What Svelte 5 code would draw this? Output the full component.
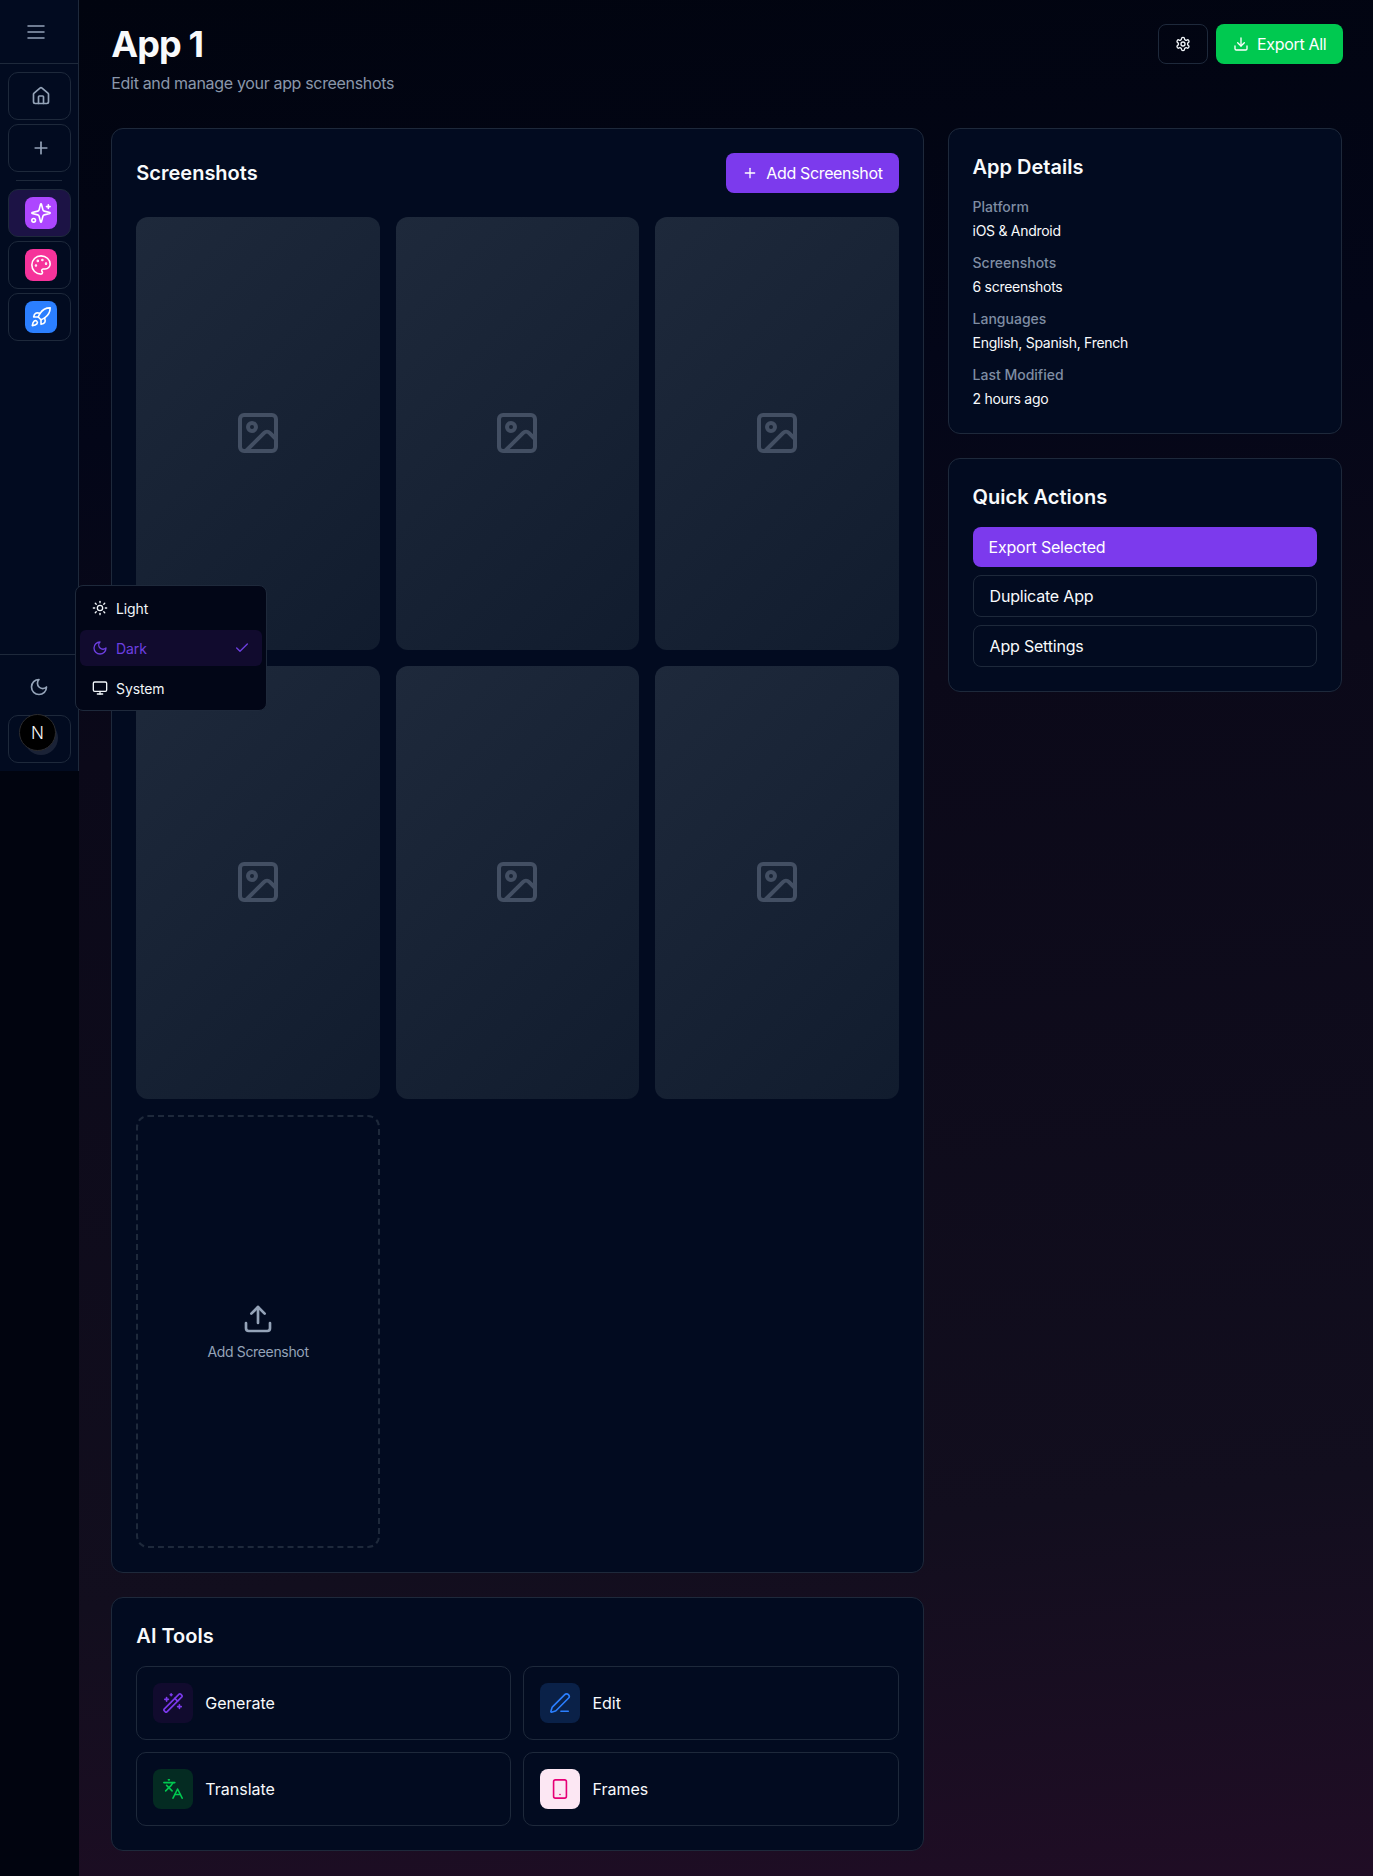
<script>
  const icons = {
    menu: '<path d="M4 12h16"/><path d="M4 6h16"/><path d="M4 18h16"/>',
    home: '<path d="M15 21v-8a1 1 0 0 0-1-1h-4a1 1 0 0 0-1 1v8"/><path d="M3 10a2 2 0 0 1 .709-1.528l7-5.999a2 2 0 0 1 2.582 0l7 5.999A2 2 0 0 1 21 10v9a2 2 0 0 1-2 2H5a2 2 0 0 1-2-2z"/>',
    plus: '<path d="M5 12h14"/><path d="M12 5v14"/>',
    sparkles: '<path d="M9.937 15.5A2 2 0 0 0 8.5 14.063l-6.135-1.582a.5.5 0 0 1 0-.962L8.5 9.936A2 2 0 0 0 9.937 8.5l1.582-6.135a.5.5 0 0 1 .963 0L14.063 8.5A2 2 0 0 0 15.5 9.937l6.135 1.581a.5.5 0 0 1 0 .964L15.5 14.063a2 2 0 0 0-1.437 1.437l-1.582 6.135a.5.5 0 0 1-.963 0z"/><path d="M20 3v4"/><path d="M22 5h-4"/><circle cx="4" cy="20" r="2"/>',
    palette: '<circle cx="13.5" cy="6.5" r=".5" fill="currentColor"/><circle cx="17.5" cy="10.5" r=".5" fill="currentColor"/><circle cx="8.5" cy="7.5" r=".5" fill="currentColor"/><circle cx="6.5" cy="12.5" r=".5" fill="currentColor"/><path d="M12 2C6.5 2 2 6.5 2 12s4.5 10 10 10c.926 0 1.648-.746 1.648-1.688 0-.437-.18-.835-.437-1.125-.29-.289-.438-.652-.438-1.125a1.64 1.64 0 0 1 1.668-1.668h1.996c3.051 0 5.555-2.503 5.555-5.554C21.965 6.012 17.461 2 12 2z"/>',
    rocket: '<path d="M4.5 16.5c-1.5 1.26-2 5-2 5s3.74-.5 5-2c.71-.84.7-2.13-.09-2.91a2.18 2.18 0 0 0-2.91-.09z"/><path d="m12 15-3-3a22 22 0 0 1 2-3.95A12.88 12.88 0 0 1 22 2c0 2.72-.78 7.5-6 11a22.35 22.35 0 0 1-4 2z"/><path d="M9 12H4s.55-3.03 2-4c1.62-1.08 5 0 5 0"/><path d="M12 15v5s3.03-.55 4-2c1.08-1.62 0-5 0-5"/>',
    settings: '<path d="M12.22 2h-.44a2 2 0 0 0-2 2v.18a2 2 0 0 1-1 1.73l-.43.25a2 2 0 0 1-2 0l-.15-.08a2 2 0 0 0-2.73.73l-.22.38a2 2 0 0 0 .73 2.73l.15.1a2 2 0 0 1 1 1.72v.51a2 2 0 0 1-1 1.74l-.15.09a2 2 0 0 0-.73 2.73l.22.38a2 2 0 0 0 2.73.73l.15-.08a2 2 0 0 1 2 0l.43.25a2 2 0 0 1 1 1.73V20a2 2 0 0 0 2 2h.44a2 2 0 0 0 2-2v-.18a2 2 0 0 1 1-1.73l.43-.25a2 2 0 0 1 2 0l.15.08a2 2 0 0 0 2.73-.73l.22-.39a2 2 0 0 0-.73-2.73l-.15-.08a2 2 0 0 1-1-1.74v-.5a2 2 0 0 1 1-1.74l.15-.09a2 2 0 0 0 .73-2.73l-.22-.38a2 2 0 0 0-2.73-.73l-.15.08a2 2 0 0 1-2 0l-.43-.25a2 2 0 0 1-1-1.73V4a2 2 0 0 0-2-2z"/><circle cx="12" cy="12" r="3"/>',
    download: '<path d="M21 15v4a2 2 0 0 1-2 2H5a2 2 0 0 1-2-2v-4"/><polyline points="7 10 12 15 17 10"/><line x1="12" x2="12" y1="15" y2="3"/>',
    upload: '<path d="M21 15v4a2 2 0 0 1-2 2H5a2 2 0 0 1-2-2v-4"/><polyline points="17 8 12 3 7 8"/><line x1="12" x2="12" y1="3" y2="15"/>',
    image: '<rect width="18" height="18" x="3" y="3" rx="2"/><circle cx="9" cy="9" r="2"/><path d="m21 15-3.086-3.086a2 2 0 0 0-2.828 0L6 21"/>',
    wand: '<path d="m21.64 3.64-1.28-1.28a1.21 1.21 0 0 0-1.72 0L2.36 18.64a1.21 1.21 0 0 0 0 1.72l1.28 1.28a1.2 1.2 0 0 0 1.72 0L21.64 5.36a1.2 1.2 0 0 0 0-1.72"/><path d="m14 7 3 3"/><path d="M5 6v4"/><path d="M19 14v4"/><path d="M10 2v2"/><path d="M7 8H3"/><path d="M21 16h-4"/><path d="M11 3H9"/>',
    pen: '<path d="M13 21h8"/><path d="M21.174 6.812a1 1 0 0 0-3.986-3.987L3.842 16.174a2 2 0 0 0-.5.83l-1.321 4.352a.5.5 0 0 0 .623.622l4.353-1.32a2 2 0 0 0 .83-.497z"/>',
    languages: '<path d="m5 8 6 6"/><path d="m4 14 6-6 2-3"/><path d="M2 5h12"/><path d="M7 2h1"/><path d="m22 22-5-10-5 10"/><path d="M14 18h6"/>',
    phone: '<rect width="14" height="20" x="5" y="2" rx="2"/><path d="M12 18h.01"/>',
    sun: '<circle cx="12" cy="12" r="4"/><path d="M12 2v2"/><path d="M12 20v2"/><path d="m4.93 4.93 1.41 1.41"/><path d="m17.66 17.66 1.41 1.41"/><path d="M2 12h2"/><path d="M20 12h2"/><path d="m6.34 17.66-1.41 1.41"/><path d="m19.07 4.93-1.41 1.41"/>',
    moon: '<path d="M12 3a6 6 0 0 0 9 9 9 9 0 1 1-9-9Z"/>',
    monitor: '<rect width="20" height="14" x="2" y="3" rx="2"/><line x1="8" x2="16" y1="21" y2="21"/><line x1="12" x2="12" y1="17" y2="21"/>',
    check: '<path d="M20 6 9 17l-5-5"/>'
  };

  const details = [
    { label: 'Platform', value: 'iOS & Android' },
    { label: 'Screenshots', value: '6 screenshots' },
    { label: 'Languages', value: 'English, Spanish, French' },
    { label: 'Last Modified', value: '2 hours ago' }
  ];

  const tools = [
    { name: 'Generate', icon: 'wand', kind: 'violet' },
    { name: 'Edit', icon: 'pen', kind: 'blue' },
    { name: 'Translate', icon: 'languages', kind: 'green' },
    { name: 'Frames', icon: 'phone', kind: 'pink' }
  ];

  const apps = [
    { icon: 'sparkles', kind: 'violet', active: true },
    { icon: 'palette', kind: 'pink', active: false },
    { icon: 'rocket', kind: 'blue', active: false }
  ];
</script>

{#snippet icon(name, size, width = 2)}
  <svg xmlns="http://www.w3.org/2000/svg" width={size} height={size} viewBox="0 0 24 24" fill="none" stroke="currentColor" stroke-width={width} stroke-linecap="round" stroke-linejoin="round">
    {@html icons[name]}
  </svg>
{/snippet}

<div class="page">
  <aside class="sidebar">
    <div class="side-top">{@render icon('menu', 24, 1.5)}</div>
    <nav class="side-nav">
      <button class="side-btn">{@render icon('home', 20)}</button>
      <button class="side-btn">{@render icon('plus', 20)}</button>
      <div class="side-rule"></div>
      {#each apps as app}
        <button class="side-btn" class:active={app.active}>
          <span class="app-tile {app.kind}">{@render icon(app.icon, 22, 1.75)}</span>
        </button>
      {/each}
    </nav>
    <div class="side-bottom">
      <div class="theme-toggle">{@render icon('moon', 20)}</div>
      <div class="side-btn user">
        <span class="avatar-under"></span>
        <span class="avatar">N</span>
      </div>
    </div>
  </aside>

  <!-- Theme dropdown sits over the sidebar and the first column -->
  <div class="theme-menu">
    <div class="theme-item">{@render icon('sun', 16)}<span>Light</span></div>
    <div class="theme-item selected">
      {@render icon('moon', 16)}<span>Dark</span>
      <span class="tick">{@render icon('check', 16)}</span>
    </div>
    <div class="theme-item">{@render icon('monitor', 16)}<span>System</span></div>
  </div>

  <main class="main">
    <header class="head">
      <div>
        <h1>App 1</h1>
        <p>Edit and manage your app screenshots</p>
      </div>
      <div class="head-actions">
        <button class="gear">{@render icon('settings', 16)}</button>
        <button class="export">{@render icon('download', 16)}Export All</button>
      </div>
    </header>

    <div class="columns">
      <div class="left">
        <section class="card">
          <div class="card-head">
            <h2>Screenshots</h2>
            <button class="add">{@render icon('plus', 16)}Add Screenshot</button>
          </div>
          <div class="shots">
            {#each Array(6) as _}
              <div class="shot">{@render icon('image', 48, 2)}</div>
            {/each}
            <div class="shot-add">
              {@render icon('upload', 32)}
              <span>Add Screenshot</span>
            </div>
          </div>
        </section>

        <section class="card">
          <h2 class="tools-title">AI Tools</h2>
          <div class="tools">
            {#each tools as tool}
              <div class="tool">
                <span class="tool-tile {tool.kind}">{@render icon(tool.icon, 22, 1.75)}</span>
                <span>{tool.name}</span>
              </div>
            {/each}
          </div>
        </section>
      </div>

      <div class="right">
        <section class="card">
          <h2 class="side-title">App Details</h2>
          <dl>
            {#each details as row}
              <div class="row">
                <dt>{row.label}</dt>
                <dd>{row.value}</dd>
              </div>
            {/each}
          </dl>
        </section>

        <section class="card">
          <h2 class="side-title">Quick Actions</h2>
          <div class="quick">
            <button class="q primary">Export Selected</button>
            <button class="q">Duplicate App</button>
            <button class="q">App Settings</button>
          </div>
        </section>
      </div>
    </div>
  </main>
</div>

<style>
  :global(body) {
    margin: 0;
    background: #01040f;
    font-family: Inter, "Liberation Sans", sans-serif;
    color: #f8fafc;
  }

  button {
    font-family: inherit;
    cursor: pointer;
  }

  h1, h2, p, dl, dd {
    margin: 0;
  }

  .page {
    position: relative;
    display: flex;
    width: 1373px;
    height: 1876px;
    background: #01040f;
    overflow: hidden;
  }

  /* sidebar */
  .sidebar {
    width: 79.33px;
    height: 771px;
    flex: none;
    box-sizing: border-box;
    display: flex;
    flex-direction: column;
    background: #020b20;
    border-right: 1px solid #1e293b;
  }

  .side-top {
    height: 64px;
    box-sizing: border-box;
    flex: none;
    display: flex;
    align-items: center;
    justify-content: center;
    padding-right: 7px;
    border-bottom: 1px solid #1e293b;
    color: #94a3b8;
  }

  .side-nav {
    flex: 1;
    display: flex;
    flex-direction: column;
    gap: 4px;
    padding: 8px;
  }

  .side-btn {
    position: relative;
    width: 63px;
    height: 48px;
    box-sizing: border-box;
    padding: 0 0 0 3px;
    display: flex;
    align-items: center;
    justify-content: center;
    background: transparent;
    border: 1px solid #1e293b;
    border-radius: 10px;
    color: #94a3b8;
  }

  .side-btn.active {
    background: #1c1345;
  }

  .side-rule {
    height: 1px;
    margin: 4px 8px 4px;
    background: #1e293b;
  }

  .app-tile {
    width: 32px;
    height: 32px;
    border-radius: 8px;
    display: flex;
    align-items: center;
    justify-content: center;
    color: #fff;
  }

  .app-tile.violet { background: #ad46ff; }
  .app-tile.pink { background: #f6339a; }
  .app-tile.blue { background: #2b7fff; }

  .side-bottom {
    height: 117px;
    flex: none;
    box-sizing: border-box;
    padding: 8px;
    border-top: 1px solid #1e293b;
  }

  .theme-toggle {
    height: 48px;
    display: flex;
    align-items: center;
    justify-content: center;
    color: #94a3b8;
  }

  .user {
    margin-top: 4px;
  }

  .avatar {
    position: absolute;
    left: 10px;
    top: -2px;
    width: 37px;
    height: 37px;
    box-sizing: border-box;
    border: 1px solid #2b2b2e;
    border-radius: 50%;
    background: #000;
    color: #f4f4f5;
    font-size: 17px;
    font-weight: 300;
    display: flex;
    align-items: center;
    justify-content: center;
  }

  .avatar-under {
    position: absolute;
    left: 15px;
    top: 5px;
    width: 34px;
    height: 34px;
    border-radius: 50%;
    background: #1a2236;
  }

  /* theme dropdown */
  .theme-menu {
    position: absolute;
    left: 75px;
    top: 585px;
    width: 192px;
    height: 126px;
    box-sizing: border-box;
    padding: 4px;
    display: flex;
    flex-direction: column;
    gap: 4px;
    background: #020617;
    border: 1px solid #1e293b;
    border-radius: 8px;
    z-index: 5;
  }

  .theme-item {
    height: 36px;
    padding: 0 12px;
    display: flex;
    align-items: center;
    gap: 8px;
    font-size: 14px;
    letter-spacing: -0.1px;
    color: #f1f5f9;
    border-radius: 6px;
  }

  .theme-item.selected {
    background: #110b2e;
    color: #6d3fe0;
  }

  .tick {
    margin-left: auto;
    display: flex;
  }

  /* main */
  .main {
    flex: 1;
    min-width: 0;
    box-sizing: border-box;
    padding: 24px 31.33px 0 32px;
    background: linear-gradient(174deg, #01040f 0%, #030618 22%, #0b0919 38%, #120e1e 80%, #200d25 100%);
  }

  .head {
    height: 104px;
    display: flex;
    justify-content: space-between;
    align-items: flex-start;
  }

  h1 {
    font-size: 36px;
    line-height: 40px;
    font-weight: 700;
    letter-spacing: -0.9px;
  }

  .head p {
    margin-top: 7px;
    font-size: 16px;
    line-height: 24px;
    letter-spacing: -0.33px;
    color: #8a97ab;
  }

  .head-actions {
    display: flex;
    gap: 8px;
    margin-right: -1.5px;
  }

  .gear {
    width: 50px;
    height: 40px;
    display: flex;
    align-items: center;
    justify-content: center;
    background: transparent;
    border: 1px solid #1e293b;
    border-radius: 8px;
    color: #f1f5f9;
  }

  .export {
    width: 127px;
    height: 40px;
    display: flex;
    align-items: center;
    justify-content: center;
    gap: 8px;
    border: 0;
    border-radius: 8px;
    background: #00c950;
    color: #fff;
    font-size: 16px;
    letter-spacing: -0.3px;
  }

  .columns {
    display: grid;
    grid-template-columns: repeat(3, 1fr);
    gap: 24px;
  }

  .left {
    grid-column: span 2;
    display: flex;
    flex-direction: column;
    gap: 24px;
  }

  .right {
    display: flex;
    flex-direction: column;
    gap: 24px;
  }

  .card {
    padding: 24px;
    background: #020b20;
    border: 1px solid #1e293b;
    border-radius: 12px;
  }

  .card-head {
    display: flex;
    justify-content: space-between;
    align-items: center;
    margin-bottom: 24px;
  }

  h2 {
    font-size: 20px;
    line-height: 28px;
    font-weight: 600;
  }

  .add {
    height: 40px;
    padding: 0 16px;
    display: flex;
    align-items: center;
    gap: 8px;
    border: 0;
    border-radius: 8px;
    background: #7c3aed;
    color: #fff;
    font-size: 16px;
    letter-spacing: -0.35px;
  }

  .shots {
    display: grid;
    grid-template-columns: repeat(3, 1fr);
    gap: 16px;
  }

  .shot {
    aspect-ratio: 9 / 16.01;
    display: flex;
    align-items: center;
    justify-content: center;
    border-radius: 12px;
    background: linear-gradient(135deg, #1e293b, #111c2e);
    color: #434f63;
  }

  .shot-add {
    aspect-ratio: 9 / 16.01;
    box-sizing: border-box;
    display: flex;
    flex-direction: column;
    align-items: center;
    justify-content: center;
    gap: 8px;
    border: 2px dashed #1e293b;
    border-radius: 12px;
    color: #94a3b8;
    font-size: 14px;
    letter-spacing: -0.34px;
  }

  .tools-title {
    margin-bottom: 16px;
  }

  .tools {
    display: grid;
    grid-template-columns: 1fr 1fr;
    gap: 12px;
  }

  .tool {
    height: 74px;
    box-sizing: border-box;
    padding: 0 16px;
    display: flex;
    align-items: center;
    gap: 12px;
    border: 1px solid #1e293b;
    border-radius: 10px;
    font-size: 16px;
  }

  .tool-tile {
    width: 40px;
    height: 40px;
    border-radius: 8px;
    display: flex;
    align-items: center;
    justify-content: center;
  }

  .tool-tile.violet { background: #110b2e; color: #7c3aed; }
  .tool-tile.blue { background: #0a2148; color: #2b7fff; }
  .tool-tile.green { background: #042b22; color: #00c950; }
  .tool-tile.pink { background: #fce7f3; color: #e60076; }

  .side-title {
    margin-bottom: 16px;
  }

  .row + .row {
    margin-top: 12px;
  }

  dt {
    font-size: 14px;
    line-height: 20px;
    font-weight: 500;
    color: #7f8da3;
  }

  dd {
    margin-top: 4px;
    font-size: 14px;
    line-height: 20px;
    letter-spacing: -0.28px;
  }

  .quick {
    display: flex;
    flex-direction: column;
    gap: 8px;
  }

  .q {
    height: 42px;
    padding: 0 16px;
    text-align: left;
    background: transparent;
    border: 1px solid #1e293b;
    border-radius: 8px;
    color: #f8fafc;
    font-size: 16px;
    letter-spacing: -0.2px;
  }

  .q.primary {
    height: 40px;
    background: #7c3aed;
    border: 0;
    color: #fff;
  }
</style>
